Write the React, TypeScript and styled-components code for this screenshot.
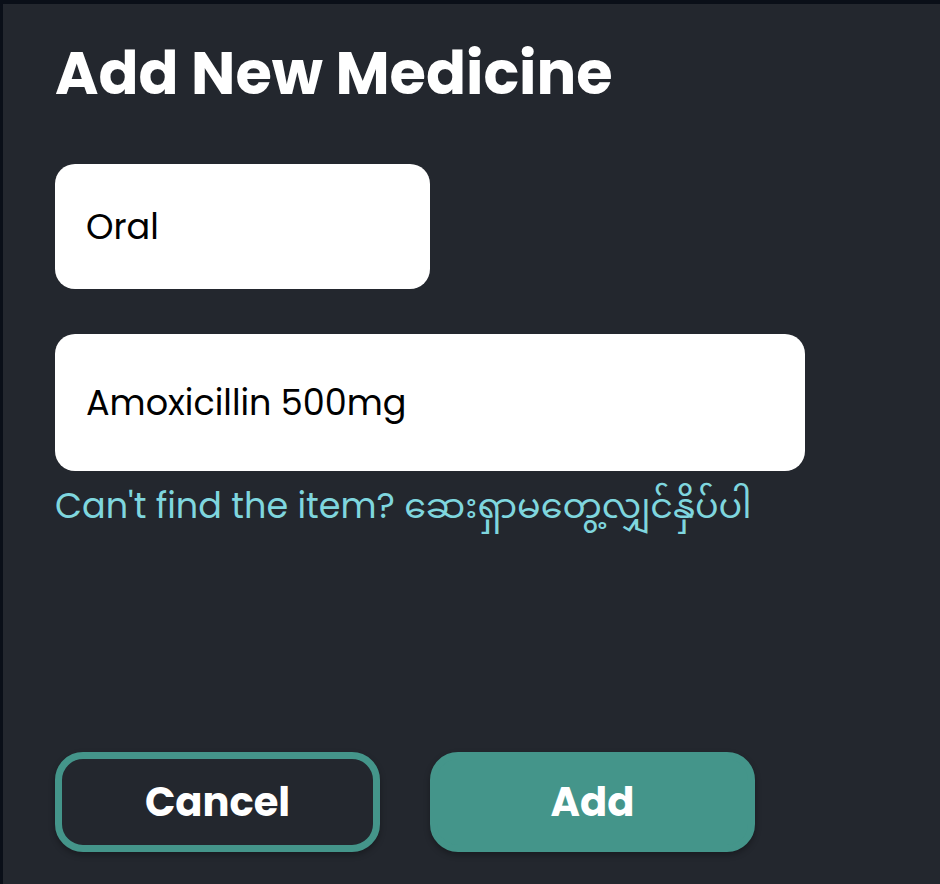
import * as React from 'react';
import styled, { createGlobalStyle } from 'styled-components';

const GlobalStyle = createGlobalStyle`
  html, body {
    margin: 0;
    padding: 0;
    background: #0a0f18;
  }
  body {
    font-family: Poppins, 'Open Sans', 'Noto Sans', 'Noto Sans Myanmar', Padauk, sans-serif;
  }
`;

const Page = styled.div`
  padding: 4px 0 0 3px;
  height: 884px;
  box-sizing: border-box;
`;

const Panel = styled.div`
  background: #23272e;
  height: 100%;
  box-sizing: border-box;
  padding: 28px 0 0 52px;
  display: flex;
  flex-direction: column;
`;

const Title = styled.h1`
  margin: 0;
  color: #ffffff;
  font-size: 59px;
  font-weight: 700;
  line-height: 84px;
`;

const Fields = styled.div`
  display: flex;
  flex-direction: column;
  gap: 45px;
  margin-top: 48px;
`;

const Field = styled.div<{ $width: number; $height: number }>`
  width: ${({ $width }) => $width}px;
  height: ${({ $height }) => $height}px;
  background: #ffffff;
  border-radius: 20px;
  display: flex;
  align-items: center;
  padding-left: 31px;
  box-sizing: border-box;
  color: #000000;
  font-size: 35px;
`;

const HelpLink = styled.a`
  color: #7fd6de;
  font-size: 35px;
  line-height: 50px;
  text-decoration: none;
  margin-top: 10px;
`;

const Actions = styled.div`
  margin-top: auto;
  margin-bottom: 32px;
  display: flex;
  gap: 50px;
`;

const Button = styled.button<{ $filled?: boolean }>`
  width: 325px;
  height: 100px;
  border-radius: 28px;
  box-sizing: border-box;
  border: 7px solid #44958a;
  background: ${({ $filled }) => ($filled ? '#44958a' : 'transparent')};
  color: #ffffff;
  font-family: inherit;
  font-size: 40px;
  font-weight: 700;
  box-shadow: 0 3px 6px rgba(0, 0, 0, 0.3);
  cursor: pointer;
`;

const App: React.FC = () => (
  <Page>
    <GlobalStyle />
    <Panel>
      <Title>Add New Medicine</Title>
      <Fields>
        <Field $width={375} $height={125}>Oral</Field>
        <Field $width={750} $height={137}>Amoxicillin 500mg</Field>
      </Fields>
      <HelpLink href="#">Can't find the item? ဆေးရှာမတွေ့လျှင်နှိပ်ပါ</HelpLink>
      <Actions>
        <Button>Cancel</Button>
        <Button $filled>Add</Button>
      </Actions>
    </Panel>
  </Page>
);

export default App;
